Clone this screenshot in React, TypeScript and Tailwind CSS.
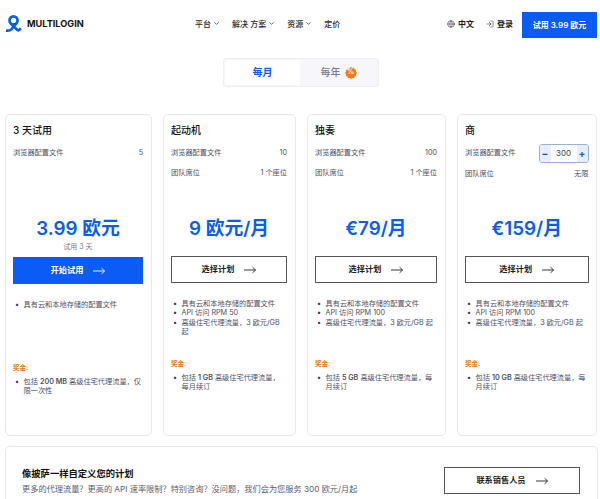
import { ChevronDown, Globe, LogIn } from "lucide-react";

const font = { fontFamily: '"Inter", "Noto Sans CJK SC", sans-serif' };

function Logo() {
  return (
    <svg width="17" height="18" viewBox="0 0 17 18" fill="none" stroke="#0b5cf0" strokeWidth="2.7">
      <circle cx="8.5" cy="5.4" r="4" />
      <path d="M5.6 8.4 L12.4 15 Q13.8 16.2 15.8 13.2" />
      <path d="M11.4 8.4 L6.4 14.4 Q4.8 16 1 15.6" />
    </svg>
  );
}

function Arrow({ color = "#222" }: { color?: string }) {
  return (
    <svg width="12" height="8" viewBox="0 0 12 8" fill="none" stroke={color} strokeWidth="0.9">
      <path d="M0 4 H11.4 M8.6 1.2 L11.6 4 L8.6 6.8" />
    </svg>
  );
}

function NavItem({ label, chevron = true }: { label: string; chevron?: boolean }) {
  return (
    <span className="flex items-center text-[8px] font-medium text-[#2a2a33]">
      {label}
      {chevron && <ChevronDown size={7} strokeWidth={2.5} className="ml-[2px]" />}
    </span>
  );
}

function Row({ label, value }: { label: string; value: string }) {
  return (
    <div className="flex items-center justify-between h-[20.5px] text-[7.2px] text-[#4a4f63]">
      <span>{label}</span>
      <span>{value}</span>
    </div>
  );
}

function Bullets({ items }: { items: React.ReactNode[] }) {
  return (
    <ul className="text-[7.2px] leading-[9.4px] text-[#4d5166]">
      {items.map((item, i) => (
        <li key={i} className="flex">
          <span className="w-[10.5px] shrink-0 pl-[2px] text-[#2f3350]">•</span>
          <span>{item}</span>
        </li>
      ))}
    </ul>
  );
}

type Plan = {
  title: string;
  width: string;
  rows: { label: string; value: string }[];
  price: string;
  features: string[];
  bonus: React.ReactNode;
};

const plans: Plan[] = [
  {
    title: "起动机",
    width: "w-[133px]",
    rows: [
      { label: "浏览器配置文件", value: "10" },
      { label: "团队席位", value: "1 个座位" },
    ],
    price: "9 欧元/月",
    features: ["具有云和本地存储的配置文件", "API 访问 RPM 50", "高级住宅代理流量，3 欧元/GB 起"],
    bonus: <>包括 <b className="font-semibold">1 GB</b> 高级住宅代理流量，<br />每月续订</>,
  },
  {
    title: "独奏",
    width: "w-[139px]",
    rows: [
      { label: "浏览器配置文件", value: "100" },
      { label: "团队席位", value: "1 个座位" },
    ],
    price: "€79/月",
    features: ["具有云和本地存储的配置文件", "API 访问 RPM 100", "高级住宅代理流量，3 欧元/GB 起"],
    bonus: <>包括 <b className="font-semibold">5 GB</b> 高级住宅代理流量，每月续订</>,
  },
];

function Bonus({ item }: { item: React.ReactNode }) {
  return (
    <>
      <div className="text-[6.5px] font-semibold text-[#f07a1a] leading-[9px]">奖金:</div>
      <div className="mt-[3.5px]">
        <Bullets items={[item]} />
      </div>
    </>
  );
}

function PlainButton() {
  return (
    <button className="flex h-[27px] w-full items-center justify-center gap-[10px] border border-[#555] bg-white text-[8.2px] font-semibold text-[#1c1c22]">
      选择计划 <Arrow />
    </button>
  );
}

function PlanCard({ plan }: { plan: Plan }) {
  return (
    <div className={`${plan.width} h-[322px] rounded-[5px] border border-[#e8e8ec] px-[7.5px] pt-[6px]`}>
      <h3 className="h-[18px] text-[10px] leading-[18px] font-medium text-[#111]">{plan.title}</h3>
      <div className="mt-[4px] h-[41px]">
        {plan.rows.map((r) => (
          <Row key={r.label} label={r.label} value={r.value} />
        ))}
      </div>
      <div className="mt-[28px] h-[34px] text-center text-[18.8px] leading-[34px] font-semibold text-[#0b5cf0]">
        {plan.price}
      </div>
      <div className="mt-[10px]">
        <PlainButton />
      </div>
      <div className="mt-[16px] h-[58px]">
        <Bullets items={plan.features} />
      </div>
      <div className="mt-[3px]">
        <Bonus item={plan.bonus} />
      </div>
    </div>
  );
}

function BusinessCard() {
  return (
    <div className="w-[140.5px] h-[322px] rounded-[5px] border border-[#e8e8ec] px-[7.5px] pt-[6px]">
      <h3 className="h-[18px] text-[10px] leading-[18px] font-medium text-[#111]">商</h3>
      <div className="mt-[4px] h-[41px]">
        <div className="flex h-[20.5px] items-center justify-between text-[7.2px] text-[#4a4f63]">
          <span>浏览器配置文件</span>
          <div className="flex h-[19.5px] w-[50px] overflow-hidden rounded-[3px] border border-[#93b3dc] text-[8px]">
            <span className="flex w-[11px] items-center justify-center bg-[#e8ecfb] text-[10px] font-bold text-[#0b4fc0]">−</span>
            <span className="flex flex-1 items-center justify-center bg-white text-[#444]">300</span>
            <span className="flex w-[11px] items-center justify-center bg-[#e8ecfb] text-[10px] font-bold text-[#0b5cf0]">+</span>
          </div>
        </div>
        <div className="mt-[1px]">
          <Row label="团队席位" value="无限" />
        </div>
      </div>
      <div className="mt-[28px] h-[34px] text-center text-[18.8px] leading-[34px] font-semibold text-[#0b5cf0]">
        €159/月
      </div>
      <div className="mt-[10px]">
        <PlainButton />
      </div>
      <div className="mt-[16px] h-[58px]">
        <Bullets items={["具有云和本地存储的配置文件", "API 访问 RPM 100", "高级住宅代理流量，3 欧元/GB 起"]} />
      </div>
      <div className="mt-[3px]">
        <Bonus item={<>包括 <b className="font-semibold">10 GB</b> 高级住宅代理流量，每月续订</>} />
      </div>
    </div>
  );
}

function TrialCard() {
  return (
    <div className="w-[147px] h-[322px] rounded-[5px] border border-[#e8e8ec] px-[7.5px] pt-[6px]">
      <h3 className="h-[18px] text-[10px] leading-[18px] font-medium text-[#111]">3 天试用</h3>
      <div className="mt-[4px] h-[41px]">
        <Row label="浏览器配置文件" value="5" />
      </div>
      <div className="mt-[28px] h-[34px] text-center text-[18.8px] leading-[34px] font-semibold text-[#0b5cf0]">
        3.99 欧元
      </div>
      <div className="mt-[-4px] h-[12px] text-center text-[7px] leading-[10px] text-[#777b8a]">试用 3 天</div>
      <button className="mt-[3px] flex h-[27px] w-full items-center justify-center gap-[10px] bg-[#0b5cf5] text-[8.2px] font-semibold text-white">
        开始试用 <Arrow color="#fff" />
      </button>
      <div className="mt-[16px] h-[64px]">
        <Bullets items={["具有云和本地存储的配置文件"]} />
      </div>
      <Bonus item={<>包括 <b className="font-semibold">200 MB</b> 高级住宅代理流量，仅限一次性</>} />
    </div>
  );
}

function SaleBadge() {
  const points = Array.from({ length: 24 }, (_, i) => {
    const r = i % 2 === 0 ? 6 : 5.1;
    const a = (i / 24) * Math.PI * 2;
    return `${6 + r * Math.cos(a)},${6 + r * Math.sin(a)}`;
  }).join(" ");
  return (
    <span className="relative flex size-[12px] items-center justify-center">
      <svg width="12" height="12" viewBox="0 0 12 12" className="absolute inset-0">
        <polygon points={points} fill="#f47a12" />
      </svg>
      <span className="relative text-[7px] font-bold text-white">%</span>
    </span>
  );
}

export default function App() {
  return (
    <div style={font} className="h-[499px] w-[600px] overflow-hidden bg-white">
      {/* Header */}
      <header className="flex h-[38px] items-end">
        <div className="mb-[1.5px] flex h-[26px] w-[195px] items-center gap-[5px] pl-[5px]">
          <Logo />
          <span className="text-[9.2px] font-bold text-[#111]">MULTILOGIN</span>
        </div>
        <nav className="mb-[1.5px] flex h-[26px] w-[252px] items-center gap-[12px]">
          <NavItem label="平台" />
          <NavItem label="解决 方案" />
          <NavItem label="资源" />
          <NavItem label="定价" chevron={false} />
        </nav>
        <div className="mb-[1.5px] flex h-[26px] w-[75px] items-center gap-[12px] text-[8px] font-semibold text-[#1c1c22]">
          <span className="flex items-center gap-[3px]">
            <Globe size={8} strokeWidth={1.5} /> 中文
          </span>
          <span className="flex items-center gap-[3px]">
            <LogIn size={8} strokeWidth={1.5} /> 登录
          </span>
        </div>
        <button className="h-[26px] w-[75px] bg-[#0b5cf5] text-[8px] font-semibold text-white">试用 3.99 欧元</button>
      </header>

      {/* Billing toggle */}
      <div className="mt-[20px] flex justify-center">
        <div className="ml-[2px] flex h-[29px] w-[156px] rounded-[3px] border border-[#eeeef5] bg-[#f6f6fb] p-[1px]">
          <div className="flex w-[75px] items-center justify-center rounded-[3px] bg-white text-[10px] font-semibold text-[#0b5cf0]">
            每月
          </div>
          <div className="flex flex-1 items-center justify-center gap-[4px] text-[10px] font-medium text-[#7a7e8e]">
            每年
            <SaleBadge />
          </div>
        </div>
      </div>

      {/* Plans */}
      <div className="mt-[27px] flex gap-[11px] pl-[4.5px]">
        <TrialCard />
        {plans.map((p) => (
          <PlanCard key={p.title} plan={p} />
        ))}
        <BusinessCard />
      </div>

      {/* Custom plan */}
      <div className="ml-[4.5px] mt-[10px] flex h-[69px] w-[593px] items-center justify-between rounded-[5px] border border-[#e8e8ec] pl-[16.5px] pr-[16.5px]">
        <div className="mt-[0.5px]">
          <h3 className="text-[9.3px] leading-[14px] font-semibold text-[#111]">像披萨一样自定义您的计划</h3>
          <p className="mt-[2.5px] text-[8.2px] leading-[12px] text-[#5a5e70]">
            更多的代理流量？更高的 API 速率限制？特别咨询？没问题，我们会为您服务 300 欧元/月起
          </p>
        </div>
        <button className="flex h-[27px] w-[136px] items-center justify-center gap-[10px] border border-[#555] text-[8.2px] font-semibold text-[#1c1c22]">
          联系销售人员 <Arrow />
        </button>
      </div>
    </div>
  );
}
